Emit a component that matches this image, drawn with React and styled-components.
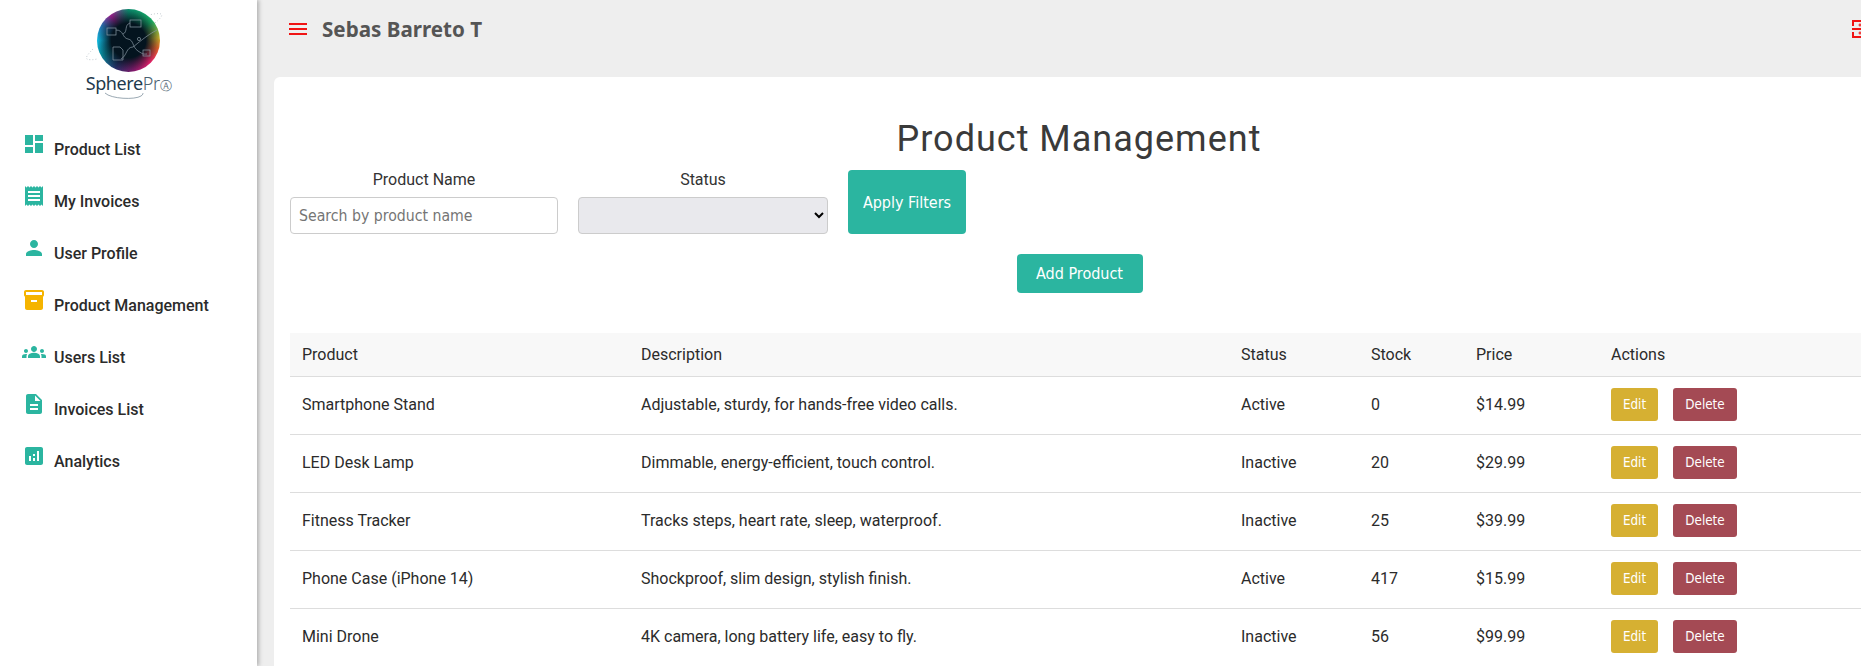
import React from 'react';
import styled, { createGlobalStyle } from 'styled-components';
import { MdDashboard, MdReceipt, MdPerson, MdInventory2, MdGroups, MdDescription, MdAnalytics } from 'react-icons/md';

const uiFont = '"DejaVu Sans Condensed", "Noto Sans", sans-serif';

const GlobalStyle = createGlobalStyle`
    html, body {
        margin: 0;
        padding: 0;
        height: 100%;
        overflow: hidden;
        background-color: #eeeeee;
        font-family: Roboto, sans-serif;
    }
`;

const Page = styled.div`
    display: flex;
    width: 1884px;
    height: 666px;
    overflow: hidden;
`;

const Sidebar = styled.aside`
    flex: 0 0 257px;
    background-color: #fff;
    box-shadow: 2px 0 4px rgba(0, 0, 0, 0.25);
    z-index: 1;
`;

const LogoWrap = styled.div`
    display: flex;
    flex-direction: column;
    align-items: center;
    padding-top: 9px;
    height: 113px;
    box-sizing: border-box;
`;

const Orb = styled.div`
    width: 63px;
    height: 63px;
    border-radius: 50%;
    background:
        radial-gradient(circle closest-side, #04141f 0%, #04141f 55%, rgba(4, 20, 31, 0) 100%),
        conic-gradient(#0c8f70 0deg, #1ab066 50deg, #c8b02a 85deg, #e8642a 105deg, #e8206a 135deg, #8a1a70 170deg, #28306a 205deg, #0a8a9a 240deg, #12c0e8 270deg, #2a70b0 300deg, #a01f90 325deg, #0c8f70 360deg);
`;

const OrbLines = styled.svg`
    display: block;
    width: 63px;
    height: 63px;
    overflow: visible;
`;

const LogoText = styled.div`
    margin-top: 0;
    font-family: "Noto Sans", sans-serif;
    font-size: 18px;
    line-height: 22px;
    color: #1f3a4d;
    letter-spacing: -0.4px;
`;

const LogoLight = styled.span`
    font-weight: 300;
    color: #4a6070;
`;

const LogoMark = styled.span`
    font-family: "DejaVu Sans", sans-serif;
    font-size: 12px;
    font-weight: 300;
    color: #5a6e7c;
`;

const Swoosh = styled.svg`
    display: block;
    width: 50px;
    height: 8px;
    margin-top: -5px;
`;

const Nav = styled.nav`
    display: flex;
    flex-direction: column;
    gap: 28px;
    padding: 19px 0 0 22px;
`;

const NavItem = styled.a`
    display: flex;
    align-items: flex-start;
    gap: 8px;
    height: 24px;
    color: #2b2b2b;
    font-size: 16px;
    font-weight: 500;
`;

const NavIcon = styled.span`
    flex: 0 0 24px;
    height: 24px;
    color: ${(props) => props.$color || '#2bb5a0'};
    font-size: 24px;
    line-height: 0;
`;

const NavLabel = styled.span`
    padding-top: 8px;
    line-height: 20px;
`;

const Main = styled.main`
    flex: 1;
    padding: 0 0 0 17px;
`;

const Header = styled.header`
    display: flex;
    align-items: center;
    height: 58px;
    padding: 0 8px 0 14px;
`;

const MenuButton = styled.svg`
    width: 20px;
    height: 20px;
    margin-right: 14px;
`;

const UserName = styled.h2`
    flex: 1;
    margin: 0;
    font-family: "Noto Sans", sans-serif;
    font-size: 20.6px;
    font-weight: 700;
    color: #555;
`;

const FullIcon = styled.svg`
    width: 24px;
    height: 24px;
`;

const Card = styled.section`
    margin-top: 19px;
    background-color: #fff;
    border-radius: 6px 0 0 0;
    padding: 0 16px;
    height: 589px;
`;

const Title = styled.h1`
    margin: 0;
    padding-top: 41px;
    height: 93px;
    box-sizing: border-box;
    font-size: 36px;
    font-weight: 400;
    line-height: 42px;
    letter-spacing: 1px;
    text-align: center;
    color: #3a3a3a;
`;

const Filters = styled.form`
    display: flex;
    align-items: flex-end;
    gap: 20px;
`;

const Field = styled.div`
    display: flex;
    flex-direction: column;
    width: ${(props) => props.$width}px;
`;

const FieldLabel = styled.label`
    height: 27px;
    font-size: 16px;
    line-height: 19px;
    text-align: center;
    color: #333;
`;

const SearchInput = styled.input`
    box-sizing: border-box;
    height: 37px;
    padding: 0 8px;
    border: 1px solid #ccc;
    border-radius: 4px;
    font-family: ${uiFont};
    font-size: 15.7px;
    &::placeholder {
        color: #757575;
    }
`;

const StatusSelect = styled.select`
    box-sizing: border-box;
    height: 37px;
    border: 1px solid #ccc;
    border-radius: 4px;
    background-color: #e9e9ed;
`;

const ApplyButton = styled.button`
    width: 118px;
    height: 64px;
    border: none;
    border-radius: 4px;
    background-color: #2bb5a0;
    color: #fff;
    font-family: ${uiFont};
    font-size: 16px;
`;

const AddRow = styled.div`
    display: flex;
    justify-content: center;
    margin-top: 20px;
    padding-left: 1px;
`;

const AddButton = styled(ApplyButton)`
    width: 126px;
    height: 39px;
    padding-bottom: 1px;
`;

const Table = styled.table`
    width: 1578px;
    margin-top: 40px;
    border-collapse: separate;
    border-spacing: 0;
    table-layout: fixed;
    font-size: 16px;
    color: #2b2b2b;
`;

const HeadCell = styled.th`
    box-sizing: border-box;
    height: 44px;
    padding: 0 12px 1px;
    background-color: #f8f8f8;
    border-bottom: 1px solid #ddd;
    font-weight: 400;
    text-align: left;
    width: ${(props) => props.$width}px;
`;

const Cell = styled.td`
    box-sizing: border-box;
    height: 58px;
    padding: 0 12px 2px;
    border-bottom: 1px solid #ddd;
`;

const ActionRow = styled.div`
    display: flex;
    gap: 15px;
`;

const RowButton = styled.button`
    height: 33px;
    padding: 0;
    width: ${(props) => props.$width}px;
    border: none;
    border-radius: 3px;
    background-color: ${(props) => props.$color};
    color: #fff;
    font-family: ${uiFont};
    font-size: 13.33px;
`;

const navItems = [
    { label: 'Product List', icon: MdDashboard },
    { label: 'My Invoices', icon: MdReceipt },
    { label: 'User Profile', icon: MdPerson },
    { label: 'Product Management', icon: MdInventory2, color: '#f5b400' },
    { label: 'Users List', icon: MdGroups },
    { label: 'Invoices List', icon: MdDescription },
    { label: 'Analytics', icon: MdAnalytics },
];

const products = [
    { name: 'Smartphone Stand', description: 'Adjustable, sturdy, for hands-free video calls.', status: 'Active', stock: 0, price: '$14.99' },
    { name: 'LED Desk Lamp', description: 'Dimmable, energy-efficient, touch control.', status: 'Inactive', stock: 20, price: '$29.99' },
    { name: 'Fitness Tracker', description: 'Tracks steps, heart rate, sleep, waterproof.', status: 'Inactive', stock: 25, price: '$39.99' },
    { name: 'Phone Case (iPhone 14)', description: 'Shockproof, slim design, stylish finish.', status: 'Active', stock: 417, price: '$15.99' },
    { name: 'Mini Drone', description: '4K camera, long battery life, easy to fly.', status: 'Inactive', stock: 56, price: '$99.99' },
];

const columns = [
    { label: 'Product', width: 339 },
    { label: 'Description', width: 600 },
    { label: 'Status', width: 130 },
    { label: 'Stock', width: 105 },
    { label: 'Price', width: 135 },
    { label: 'Actions', width: 269 },
];

const App = () => {
    return (
        <Page>
            <GlobalStyle />
            <Sidebar>
                <LogoWrap>
                    <Orb>
                        <OrbLines viewBox="0 0 63 63" fill="none" stroke="#8a9aa5" strokeWidth="0.7">
                            <rect x="10" y="19" width="9" height="7" />
                            <rect x="33" y="11" width="11" height="7" />
                            <path d="M16 38h7l3 3v10h-10z" />
                            <path d="M19 21c8 0 6 8 12 9s4 8 10 12 6 3 9 3" />
                            <path d="M33 14c-6 2-2 9-7 11M24 50c6-3 5-12 12-12 4-3 14-12 24-17" />
                            <circle cx="42" cy="30" r="1.6" />
                            <rect x="46" y="41" width="7" height="6" />
                            <path d="M58 14c6-5 8-8 6-9s-8 0-12 1M-4 40c-5 5-8 9-6 10s6 1 10 0" stroke="#a9b4bb" strokeDasharray="1 2" />
                        </OrbLines>
                    </Orb>
                    <LogoText>Sphere<LogoLight>Pr</LogoLight><LogoMark>Ⓐ</LogoMark></LogoText>
                    <Swoosh viewBox="0 0 50 8" fill="none" stroke="#6f8290" strokeWidth="0.7">
                        <path d="M1 1c6 6 30 7 36 3 2-1 2-3 2-3" />
                    </Swoosh>
                </LogoWrap>
                <Nav>
                    {navItems.map((item) => (
                        <NavItem key={item.label}>
                            <NavIcon $color={item.color}><item.icon /></NavIcon>
                            <NavLabel>{item.label}</NavLabel>
                        </NavItem>
                    ))}
                </Nav>
            </Sidebar>
            <Main>
                <Header>
                    <MenuButton viewBox="0 0 20 20" stroke="#f01414" strokeWidth="2">
                        <path d="M1 5h18M1 10h18M1 15h18" />
                    </MenuButton>
                    <UserName>Sebas Barreto T</UserName>
                    <FullIcon viewBox="0 0 24 24" fill="none" stroke="#f01414" strokeWidth="2">
                        <path d="M1 9V4h22v5M1 15v5h22v-5M0 12h24" />
                        <path d="M8 6.500v3M6.500 8h3M8 14.500v3M6.500 16h3" strokeWidth="1.2" />
                    </FullIcon>
                </Header>
                <Card>
                    <Title>Product Management</Title>
                    <Filters>
                        <Field $width={268}>
                            <FieldLabel>Product Name</FieldLabel>
                            <SearchInput placeholder="Search by product name" />
                        </Field>
                        <Field $width={250}>
                            <FieldLabel>Status</FieldLabel>
                            <StatusSelect />
                        </Field>
                        <ApplyButton type="button">Apply Filters</ApplyButton>
                    </Filters>
                    <AddRow>
                        <AddButton type="button">Add Product</AddButton>
                    </AddRow>
                    <Table>
                        <thead>
                            <tr>
                                {columns.map((col) => (
                                    <HeadCell key={col.label} $width={col.width}>{col.label}</HeadCell>
                                ))}
                            </tr>
                        </thead>
                        <tbody>
                            {products.map((product) => (
                                <tr key={product.name}>
                                    <Cell>{product.name}</Cell>
                                    <Cell>{product.description}</Cell>
                                    <Cell>{product.status}</Cell>
                                    <Cell>{product.stock}</Cell>
                                    <Cell>{product.price}</Cell>
                                    <Cell>
                                        <ActionRow>
                                            <RowButton $width={47} $color="#d6b032">Edit</RowButton>
                                            <RowButton $width={64} $color="#a44a54">Delete</RowButton>
                                        </ActionRow>
                                    </Cell>
                                </tr>
                            ))}
                        </tbody>
                    </Table>
                </Card>
            </Main>
        </Page>
    );
};

export default App;
